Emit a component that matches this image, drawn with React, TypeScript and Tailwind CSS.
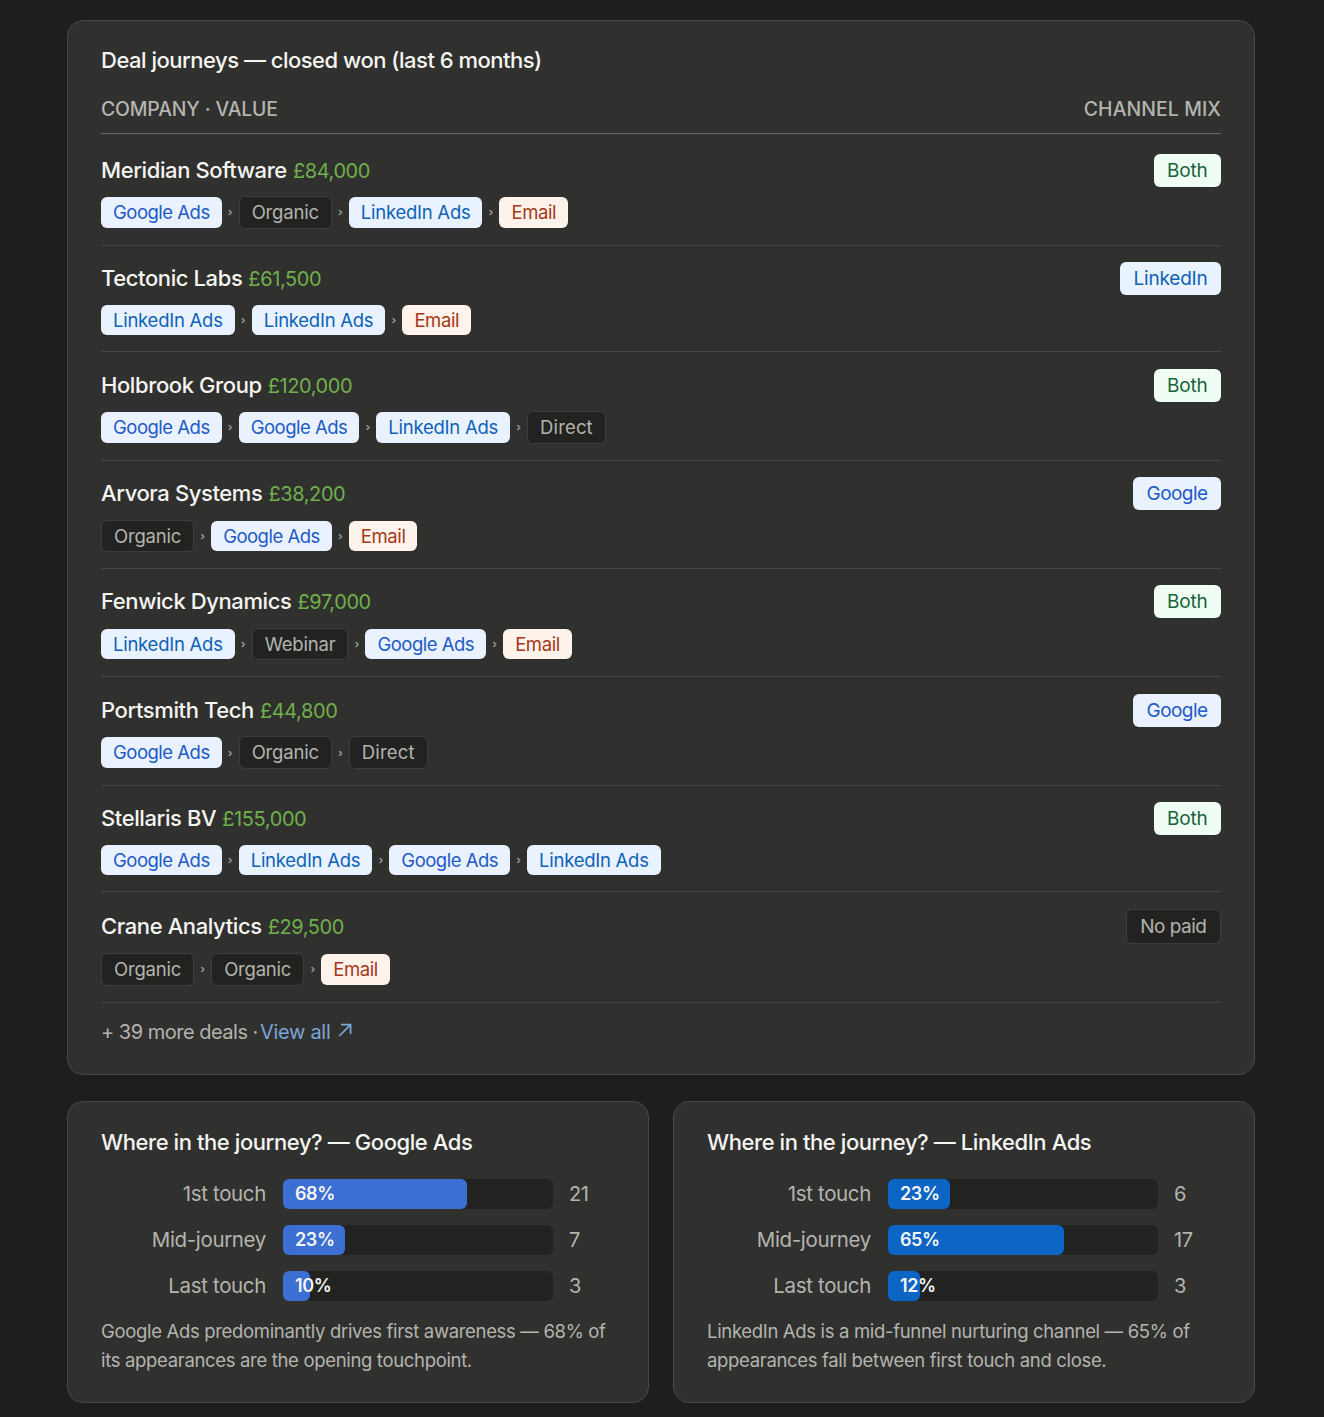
type Kind = "G" | "L" | "E" | "N" | "D";
const pillCls: Record<Kind, string> = {
  G: "bg-[#ebf2ff] text-[#1d5bc6] tracking-[-0.5px]",
  L: "bg-[#e8f3ff] text-[#0f62b8] tracking-[-0.25px]",
  E: "bg-[#fdf3ea] text-[#a5381a] tracking-[-0.4px]",
  N: "bg-[#222221] text-[#b4b4ae] border border-[#3d3d3b] tracking-[-0.2px]",
  D: "bg-[#222221] text-[#b4b4ae] border border-[#3d3d3b] tracking-[0.15px]",
};
const kindOf = (s: string): Kind =>
  s === "Google Ads" ? "G" : s === "LinkedIn Ads" ? "L" : s === "Email" ? "E" : s === "Direct" ? "D" : "N";

const deals = [
  { name: "Meridian Software", value: "£84,000", mix: "Both", steps: ["Google Ads", "Organic", "LinkedIn Ads", "Email"] },
  { name: "Tectonic Labs", value: "£61,500", mix: "LinkedIn", steps: ["LinkedIn Ads", "LinkedIn Ads", "Email"] },
  { name: "Holbrook Group", value: "£120,000", mix: "Both", steps: ["Google Ads", "Google Ads", "LinkedIn Ads", "Direct"] },
  { name: "Arvora Systems", value: "£38,200", mix: "Google", steps: ["Organic", "Google Ads", "Email"] },
  { name: "Fenwick Dynamics", value: "£97,000", mix: "Both", steps: ["LinkedIn Ads", "Webinar", "Google Ads", "Email"] },
  { name: "Portsmith Tech", value: "£44,800", mix: "Google", steps: ["Google Ads", "Organic", "Direct"] },
  { name: "Stellaris BV", value: "£155,000", mix: "Both", steps: ["Google Ads", "LinkedIn Ads", "Google Ads", "LinkedIn Ads"] },
  { name: "Crane Analytics", value: "£29,500", mix: "No paid", steps: ["Organic", "Organic", "Email"] },
];

const mixCls: Record<string, string> = {
  Both: "bg-[#f0fdf4] text-[#17633a] tracking-[-0.2px]",
  LinkedIn: "bg-[#e8f3ff] text-[#0f62b8] tracking-[-0.2px]",
  Google: "bg-[#ebf2ff] text-[#1d5bc6] tracking-[-0.55px]",
  "No paid": "bg-[#222221] text-[#b4b4ae] border border-[#3d3d3b] tracking-[-0.5px]",
};

function Panel({ title, color, labelW, rows, note }: { title: string; color: string; labelW: string; rows: [string, number, number][]; note: string }) {
  return (
    <section className="rounded-[16px] border border-[#484846] bg-[#30302e] px-[33px] pt-[25px] pb-[27px]">
      <h2 className="text-[22px] leading-[30px] font-[550] tracking-[-0.42px] text-[#f5f5f2]">{title}</h2>
      <div className="mt-[22px] flex flex-col gap-[16px]">
        {rows.map(([label, pct, n]) => (
          <div key={label} className="flex items-center gap-[17px]">
            <span className={`text-right text-[20.5px] leading-[30px] tracking-[-0.35px] text-[#b4b4ae] ${labelW}`}>{label}</span>
            <div className="h-[30px] w-[270px] rounded-[6px] bg-[#222221]">
              <div
                className={`flex h-full items-center rounded-[6px] pl-[12px] text-[18px] font-semibold tracking-[-0.4px] whitespace-nowrap text-[#f5f5f2] ${color}`}
                style={{ width: `${pct}%` }}
              >
                {pct}%
              </div>
            </div>
            <span className="-ml-px text-[20px] leading-[30px] tracking-[-0.4px] text-[#b4b4ae]">{n}</span>
          </div>
        ))}
      </div>
      <p className="mt-[16px] text-[18.5px] leading-[29px] tracking-[-0.33px] text-[#b4b4ae]">{note}</p>
    </section>
  );
}

export default function App() {
  return (
    <div className="min-h-[1417px] bg-[#1e1e1e] pt-[20px] pr-[69px] pl-[67px] font-['Inter',sans-serif]">
      <section className="rounded-[16px] border border-[#484846] bg-[#30302e] px-[33px] pt-[24px] pb-[27px]">
        <h2 className="text-[22px] leading-[30px] font-[550] tracking-[-0.5px] text-[#f5f5f2]">
          Deal journeys — closed won (last 6 months)
        </h2>
        <div className="mt-[19px] flex items-center justify-between border-b border-[#6a6a67] pb-[9px] text-[19.4px] leading-[30px] font-medium text-[#b4b4ae]">
          <span className="tracking-[-0.14px]">COMPANY · VALUE</span>
          <span className="tracking-[0.1px]">CHANNEL MIX</span>
        </div>
        <div className="flex flex-col">
          {deals.map((d, i) => (
            <div key={d.name} className={`border-b border-[#444442] ${i === 0 ? "pt-[20.2px] pb-[16.3px]" : "pt-[16.3px] pb-[16px]"}`}>
              <div className="flex items-center justify-between">
                <div className="flex items-baseline gap-[6px] leading-[30px]">
                  <span className="text-[22px] font-[550] tracking-[-0.4px] text-[#f5f5f2]">{d.name}</span>
                  <span className="text-[20px] tracking-[-0.4px] text-[#6eb04b]">{d.value}</span>
                </div>
                <span className={`rounded-[6px] px-[13.5px] py-[2px] text-[19px] leading-[29px] ${mixCls[d.mix]}`}>{d.mix}</span>
              </div>
              <div className={`flex items-center ${i === 0 ? "mt-[9px]" : "mt-[9.7px]"}`}>
                {d.steps.map((s, j) => (
                  <div key={j} className="flex items-center">
                    {j > 0 && <span className="w-[17px] text-center text-[11px] leading-[30px] font-bold text-[#9a9a94]">›</span>}
                    <span className={`rounded-[6px] px-[12px] py-[2px] text-[18.5px] leading-[26.4px] ${pillCls[kindOf(s)]}`}>{s}</span>
                  </div>
                ))}
              </div>
            </div>
          ))}
        </div>
        <div className="mt-[14px] flex items-center text-[20px] leading-[30px] tracking-[-0.5px] text-[#b4b4ae]">
          <span>+ 39 more deals ·&nbsp;</span>
          <a className="-ml-[3px] tracking-[-0.3px] text-[#7aa5d8]">View all</a>
          <svg className="mb-[3px] ml-[8px] text-[#7aa5d8]" width="14" height="14" viewBox="0 0 14 14" fill="none" stroke="currentColor" strokeWidth="1.7">
            <path d="M1.2 13 L12.4 1.8 M3 1.6 H12.6 V11" />
          </svg>
        </div>
      </section>
      <div className="mt-[26px] grid grid-cols-2 gap-[24px]">
        <Panel
          title="Where in the journey? — Google Ads"
          color="bg-[#3b6fd1]"
          labelW="w-[165px]"
          rows={[["1st touch", 68, 21], ["Mid-journey", 23, 7], ["Last touch", 10, 3]]}
          note="Google Ads predominantly drives first awareness — 68% of its appearances are the opening touchpoint."
        />
        <Panel
          title="Where in the journey? — LinkedIn Ads"
          color="bg-[#0c65c4]"
          labelW="w-[164px]"
          rows={[["1st touch", 23, 6], ["Mid-journey", 65, 17], ["Last touch", 12, 3]]}
          note="LinkedIn Ads is a mid-funnel nurturing channel — 65% of appearances fall between first touch and close."
        />
      </div>
    </div>
  );
}
